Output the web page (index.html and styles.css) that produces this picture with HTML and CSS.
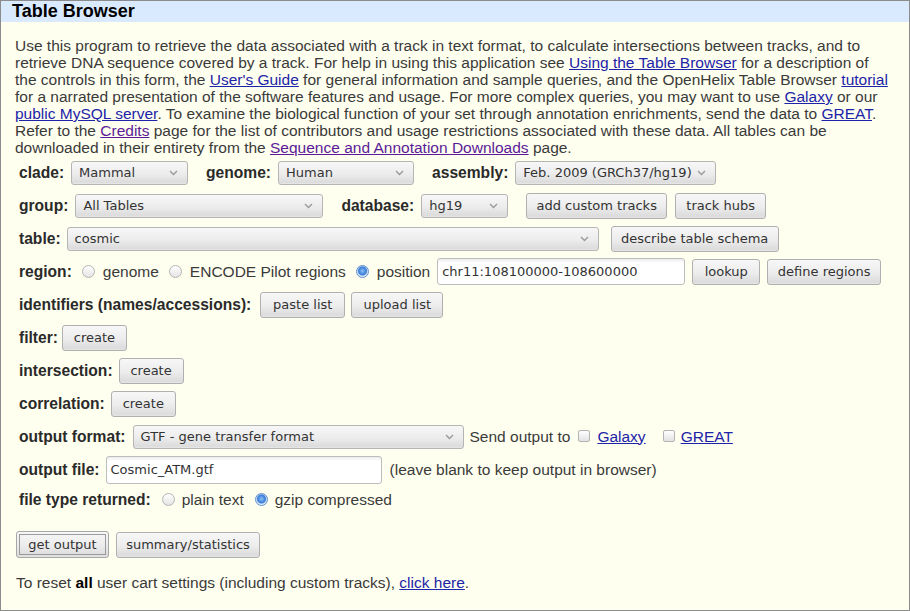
FILE: index.html
```html
<!DOCTYPE html>
<html>
<head>
<meta charset="utf-8">
<title>Table Browser</title>
<link rel="stylesheet" href="styles.css">
</head>
<body>
<div class="page">
  <div class="titlebar"><h1 class="title">Table Browser</h1></div>
  <div class="content">
    <p class="intro">Use this program to retrieve the data associated with a track in text format, to calculate intersections between tracks, and to retrieve DNA sequence covered by a track. For help in using this application see <a href="#">Using the Table Browser</a> for a description of the controls in this form, the <a href="#">User's Guide</a> for general information and sample queries, and the OpenHelix Table Browser <a href="#">tutorial</a> for a narrated presentation of the software features and usage. For more complex queries, you may want to use <a href="#">Galaxy</a> or our <a href="#">public MySQL server</a>. To examine the biological function of your set through annotation enrichments, send the data to <a href="#">GREAT</a>. Refer to the <a class="visited" href="#">Credits</a> page for the list of contributors and usage restrictions associated with these data. All tables can be downloaded in their entirety from the <a class="visited" href="#">Sequence and Annotation Downloads</a> page.</p>

    <form class="form">
      <div class="row">
        <b class="lbl">clade:</b>
        <span class="select w-clade"><span>Mammal</span><svg class="chev" width="9" height="6" viewBox="0 0 9 6"><path d="M1 1 L4.5 4.5 L8 1" fill="none" stroke="#9a9a9a" stroke-width="1.4"/></svg></span>
        <b class="lbl grp">genome:</b>
        <span class="select w-genome"><span>Human</span><svg class="chev" width="9" height="6" viewBox="0 0 9 6"><path d="M1 1 L4.5 4.5 L8 1" fill="none" stroke="#9a9a9a" stroke-width="1.4"/></svg></span>
        <b class="lbl grp">assembly:</b>
        <span class="select w-assembly"><span>Feb. 2009 (GRCh37/hg19)</span><svg class="chev" width="9" height="6" viewBox="0 0 9 6"><path d="M1 1 L4.5 4.5 L8 1" fill="none" stroke="#9a9a9a" stroke-width="1.4"/></svg></span>
      </div>

      <div class="row">
        <b class="lbl">group:</b>
        <span class="select w-group"><span>All Tables</span><svg class="chev" width="9" height="6" viewBox="0 0 9 6"><path d="M1 1 L4.5 4.5 L8 1" fill="none" stroke="#9a9a9a" stroke-width="1.4"/></svg></span>
        <b class="lbl grp">database:</b>
        <span class="select w-db"><span>hg19</span><svg class="chev" width="9" height="6" viewBox="0 0 9 6"><path d="M1 1 L4.5 4.5 L8 1" fill="none" stroke="#9a9a9a" stroke-width="1.4"/></svg></span>
        <button type="button" class="btn w-addct">add custom tracks</button>
        <button type="button" class="btn w-hubs">track hubs</button>
      </div>

      <div class="row">
        <b class="lbl">table:</b>
        <span class="select w-table"><span>cosmic</span><svg class="chev" width="9" height="6" viewBox="0 0 9 6"><path d="M1 1 L4.5 4.5 L8 1" fill="none" stroke="#9a9a9a" stroke-width="1.4"/></svg></span>
        <button type="button" class="btn gap12 w-schema">describe table schema</button>
      </div>

      <div class="row">
        <b class="lbl">region:</b>
        <span class="radio r-first"></span><span class="opt">genome</span>
        <span class="radio"></span><span class="opt">ENCODE Pilot regions</span>
        <span class="radio on"></span><span class="opt">position</span>
        <span class="input w-pos">chr11:108100000-108600000</span>
        <button type="button" class="btn w-lookup">lookup</button>
        <button type="button" class="btn w-define">define regions</button>
      </div>

      <div class="row">
        <b class="lbl">identifiers (names/accessions):</b>
        <button type="button" class="btn w-paste">paste list</button>
        <button type="button" class="btn w-upload">upload list</button>
      </div>

      <div class="row">
        <b class="lbl">filter:</b>
        <button type="button" class="btn w-create c-filter">create</button>
      </div>

      <div class="row">
        <b class="lbl">intersection:</b>
        <button type="button" class="btn w-create">create</button>
      </div>

      <div class="row">
        <b class="lbl">correlation:</b>
        <button type="button" class="btn w-create">create</button>
      </div>

      <div class="row">
        <b class="lbl">output format:</b>
        <span class="select w-format"><span>GTF - gene transfer format</span><svg class="chev" width="9" height="6" viewBox="0 0 9 6"><path d="M1 1 L4.5 4.5 L8 1" fill="none" stroke="#9a9a9a" stroke-width="1.4"/></svg></span>
        <span class="plain send">Send output to</span>
        <span class="check c-first"></span><a href="#" class="optlink">Galaxy</a>
        <span class="check c-second"></span><a href="#" class="optlink">GREAT</a>
      </div>

      <div class="row">
        <b class="lbl">output file:</b>
        <span class="input w-file">Cosmic_ATM.gtf</span>
        <span class="plain hint">(leave blank to keep output in browser)</span>
      </div>

      <div class="row row-short">
        <b class="lbl">file type returned:</b>
        <span class="radio r-first2"></span><span class="opt">plain text</span>
        <span class="radio on r-second2"></span><span class="opt">gzip compressed</span>
      </div>

      <div class="row row-submit">
        <button type="button" class="btn default w-get">get output</button>
        <button type="button" class="btn w-summary">summary/statistics</button>
      </div>
    </form>

    <p class="reset">To reset <b>all</b> user cart settings (including custom tracks), <a href="#">click here</a>.</p>
  </div>
</div>
</body>
</html>
```

FILE: styles.css
```css
html, body {
  margin: 0;
  padding: 0;
  background: #fffff0;
}

.page {
  box-sizing: border-box;
  width: 910px;
  height: 611px;
  border: 1px solid #8c8c8c;
  background: #fffff0;
  font-family: "Liberation Sans", Arial, sans-serif;
  font-size: 15.5px;
  color: #3a3a3a;
  overflow: hidden;
}

.titlebar {
  height: 21px;
  background: #d9eaff;
  padding-left: 11px;
}

.title {
  margin: 0;
  font-family: "Liberation Sans", Arial, sans-serif;
  font-size: 18px;
  font-weight: bold;
  line-height: 21px;
  color: #000;
}

.content {
  padding: 15px 15px 0 14px;
}

.intro {
  margin: 0;
  line-height: 17px;
}

a {
  color: #1d24a8;
  text-decoration: underline;
}

a.visited {
  color: #5b1a98;
}

.form {
  margin: 0;
  padding-left: 4px;
}

.row {
  display: flex;
  align-items: center;
  height: 33px;
}

.row-short {
  height: 27px;
}

.row-submit {
  height: 29px;
  margin-top: 17px;
  margin-left: -3px;
}

.lbl {
  font-family: "Liberation Sans", Arial, sans-serif;
  font-weight: bold;
  font-size: 15.6px;
  color: #2a2a2a;
  white-space: nowrap;
  margin-right: 7px;
}

.grp {
  margin-left: 18px;
}

.gap12 {
  margin-left: 12px;
}

.select {
  box-sizing: border-box;
  display: inline-flex;
  align-items: center;
  justify-content: space-between;
  height: 24px;
  padding: 0 9px 0 7px;
  border: 1px solid #b5b5b5;
  border-radius: 3px;
  background: linear-gradient(to bottom, #f7f7f7 0%, #ececec 55%, #dcdcdc 92%, #e8e8e8 100%);
  font-family: "DejaVu Sans", sans-serif;
  font-size: 13px;
  color: #333;
  white-space: nowrap;
}

.chev {
  display: block;
  flex: none;
}

.btn {
  box-sizing: border-box;
  height: 26px;
  padding: 0;
  border: 1px solid #b0b0b0;
  border-radius: 3px;
  background: linear-gradient(to bottom, #f7f7f7 0%, #ececec 55%, #dcdcdc 92%, #e6e6e6 100%);
  font-family: "DejaVu Sans", sans-serif;
  font-size: 13px;
  color: #333;
  white-space: nowrap;
  margin-right: 7px;
}

.btn.default {
  height: 27px;
  border-color: #a6a6a6;
  outline: 1px solid #9a9a9a;
  outline-offset: -4px;
}

.input {
  box-sizing: border-box;
  display: inline-flex;
  align-items: center;
  height: 27px;
  padding: 0 6px 0 4px;
  border: 1px solid #bdbdbd;
  border-radius: 3px;
  background: linear-gradient(to bottom, #ececec 0%, #ffffff 4px, #ffffff 100%);
  font-family: "DejaVu Sans", sans-serif;
  font-size: 13px;
  color: #333;
  white-space: nowrap;
}

.radio {
  box-sizing: border-box;
  flex: none;
  width: 13px;
  height: 13px;
  border-radius: 50%;
  border: 1px solid #b4b4b4;
  background: linear-gradient(to bottom, #ffffff 0%, #e4e4e4 100%);
  margin: 0 8px 0 10px;
}

.radio.on {
  border-color: #5e8fcc;
  background: radial-gradient(circle at 50% 45%, #8ec0f6 0, #4a8ce0 3px, #3f7fd4 4px, #c9dcf4 5px, #eef4fb 6px);
}

.r-first { margin-left: 3px; }
.r-first2 { margin-left: 4px; margin-right: 7px; }
.r-second2 { margin-left: 11px; margin-right: 7px; }

.opt {
  white-space: nowrap;
}

.plain {
  white-space: nowrap;
}

.send {
  margin-left: 6px;
}

.hint {
  margin-left: 8px;
}

.check {
  box-sizing: border-box;
  flex: none;
  width: 12px;
  height: 12px;
  border: 1px solid #b4b4b4;
  border-radius: 2px;
  background: linear-gradient(to bottom, #ffffff 0%, #e2e2e2 100%);
  margin-top: -2px;
  margin-right: 7px;
}

.c-first { margin-left: 8px; }
.c-second { margin-left: 17px; margin-right: 6px; }

.optlink {
  white-space: nowrap;
}

.reset {
  margin: 15px 0 0 1px;
  line-height: 17px;
}

.reset b {
  color: #000;
}

/* control widths */
.w-clade { width: 117px; }
.w-genome { width: 136px; }
.w-assembly { width: 201px; }
.w-group { width: 248px; }
.w-db { width: 87px; }
.w-addct { width: 141px; margin-left: 18px; margin-right: 8px; }
.w-hubs { width: 91px; }
.w-table { width: 532px; margin-left: -1px; }
.w-schema { width: 168px; }
.w-pos { width: 248px; margin-left: 7px; margin-right: 7px; }
.w-lookup { width: 68px; }
.w-define { width: 114px; }
.w-paste { width: 85px; margin-left: 2px; margin-right: 6px; }
.w-upload { width: 92px; }
.w-create { width: 65px; margin-left: -1px; }
.c-filter { margin-left: -3px; }
.w-format { width: 331px; }
.w-file { width: 276px; height: 28px; margin-left: -1px; }
.w-get { width: 93px; }
.w-summary { width: 144px; }
```
